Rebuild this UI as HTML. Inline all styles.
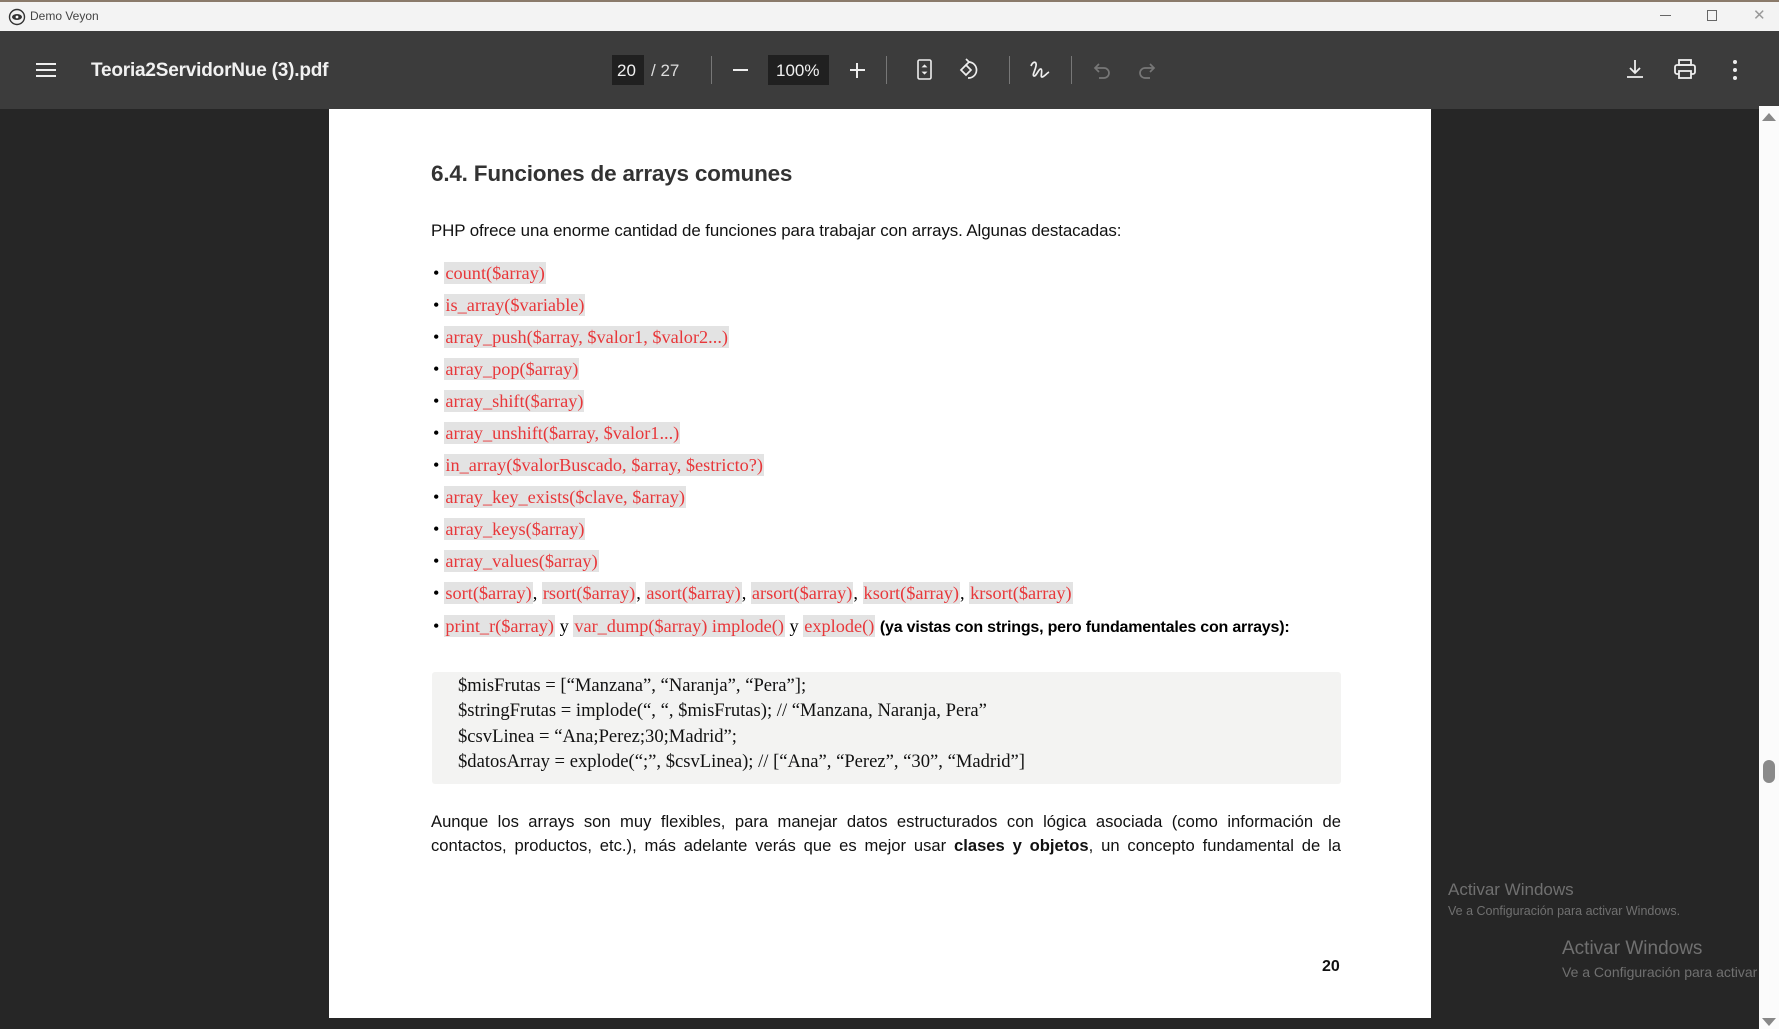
<!DOCTYPE html>
<html><head><meta charset="utf-8"><style>
*{margin:0;padding:0;box-sizing:border-box}
body{width:1779px;height:1029px;overflow:hidden;background:#262626;font-family:"Liberation Sans",sans-serif;position:relative}
.abs{position:absolute}
#tb{left:0;top:0;width:1779px;height:31px;background:#f3f3f3;border-top:2px solid #8a7a6a}
#bar{left:0;top:31px;width:1779px;height:78px;background:#3c3c3c}
.w{color:#f1f1f1}
.sep{width:1px;height:28px;background:#777;top:56px}
svg{position:absolute}
#page{left:329px;top:109px;width:1102px;height:909px;background:#fff}
.li{position:absolute;left:433px;font-family:"Liberation Serif",serif;font-size:18.3px;color:#000;white-space:nowrap}
.li .b{margin-right:5px}
.r{color:#e8373a;background:#e3e3e3;padding:1px 1px}
.c{font-family:"Liberation Serif",serif;font-size:18.6px;color:#111;position:absolute;left:458px;white-space:nowrap}
.wm{color:#707070;white-space:nowrap}
.p{position:absolute;left:431px;width:910px;font-size:16.6px;color:#111;text-align:justify;text-align-last:justify;white-space:nowrap}
</style></head><body>
<div id="tb" class="abs">
 <svg width="18" height="18" style="left:8px;top:6px" viewBox="0 0 18 18"><circle cx="9" cy="9" r="7.5" fill="none" stroke="#333" stroke-width="1.4"/><ellipse cx="9" cy="9" rx="5" ry="3" fill="#333"/><circle cx="9" cy="9" r="1.4" fill="#fff"/></svg>
 <div class="abs" style="left:30px;top:7px;font-size:12px;color:#444">Demo Veyon</div>
 <div class="abs" style="left:1660px;top:13px;width:11px;height:1px;background:#666"></div>
 <div class="abs" style="left:1707px;top:8px;width:10px;height:11px;border:1px solid #666"></div>
 <div class="abs" style="left:1753px;top:4px;font-size:15px;color:#999">✕</div>
</div>
<div id="bar" class="abs">
 <svg width="20" height="16" style="left:36px;top:31px"><rect y="1" width="20" height="2" fill="#eee"/><rect y="7" width="20" height="2" fill="#eee"/><rect y="13" width="20" height="2" fill="#eee"/></svg>
 <div class="abs w" style="left:91px;top:29px;font-size:19px;font-weight:bold;letter-spacing:-0.2px">Teoria2ServidorNue (3).pdf</div>
 <div class="abs" style="left:612px;top:24px;width:32px;height:30px;background:#202020"></div>
 <div class="abs w" style="left:617px;top:30px;font-size:17px">20</div>
 <div class="abs w" style="left:651px;top:30px;font-size:17px;color:#ddd">/ 27</div>
 <div class="abs sep" style="left:711px;top:25px"></div>
 <div class="abs" style="left:733px;top:38px;width:15px;height:2px;background:#eee"></div>
 <div class="abs" style="left:768px;top:24px;width:61px;height:30px;background:#202020"></div>
 <div class="abs w" style="left:776px;top:30px;font-size:17px">100%</div>
 <div class="abs" style="left:850px;top:38px;width:15px;height:2px;background:#eee"></div>
 <div class="abs" style="left:856px;top:32px;width:2px;height:15px;background:#eee"></div>
 <div class="abs sep" style="left:886px;top:25px"></div>
 <svg width="20" height="24" style="left:915px;top:27px" fill="none" stroke="#eee" stroke-width="1.6"><rect x="3" y="2" width="13" height="19" rx="1.5"/><path d="M9.5 7l-2 2h4zM9.5 16l-2-2h4z" fill="#eee" stroke-width="0.8"/></svg>
 <svg width="26" height="26" style="left:956px;top:26px" fill="none" stroke="#eee" stroke-width="1.7"><path d="M5 13l5-5 5 5-5 5z"/><path d="M13 5a8 8 0 1 1 -1 16"/><path d="M10 2l3 3-3 3"/></svg>
 <div class="abs sep" style="left:1009px;top:25px"></div>
 <svg width="24" height="24" style="left:1028px;top:27px" fill="none" stroke="#eee" stroke-width="1.7"><path d="M3 8c2-5 6-5 5 0s-4 9-2 10 5-8 7-7-1 8 1 8 5-4 7-5"/></svg>
 <div class="abs sep" style="left:1071px;top:25px"></div>
 <svg width="22" height="22" style="left:1091px;top:29px" fill="none" stroke="#777" stroke-width="1.7"><path d="M5 8h8a5 5 0 0 1 0 10H8"/><path d="M8 4L4 8l4 4"/></svg>
 <svg width="22" height="22" style="left:1136px;top:29px" fill="none" stroke="#777" stroke-width="1.7"><path d="M17 8H9a5 5 0 0 0 0 10h5"/><path d="M14 4l4 4-4 4"/></svg>
 <svg width="24" height="24" style="left:1623px;top:26px" fill="none" stroke="#eee" stroke-width="1.8"><path d="M12 3v13M7 11l5 5 5-5M4 20h16"/></svg>
 <svg width="26" height="24" style="left:1672px;top:26px" fill="none" stroke="#eee" stroke-width="1.8"><rect x="7" y="3" width="12" height="5"/><rect x="3" y="8" width="20" height="9" rx="2"/><rect x="7" y="14" width="12" height="7" fill="#3c3c3c"/></svg>
 <svg width="6" height="22" style="left:1732px;top:28px" fill="#eee"><circle cx="3" cy="3" r="2"/><circle cx="3" cy="11" r="2"/><circle cx="3" cy="19" r="2"/></svg>
</div>
<div id="page" class="abs"></div>
<div class="abs" style="left:431px;top:161px;font-size:22.5px;font-weight:bold;color:#333;letter-spacing:-0.2px">6.4. Funciones de arrays comunes</div>
<div class="abs" style="left:431px;top:221px;font-size:16.9px;color:#111;letter-spacing:-0.1px">PHP ofrece una enorme cantidad de funciones para trabajar con arrays. Algunas destacadas:</div>
<div class="li" style="top:263px"><span class="b">•</span><span class="r">count($array)</span></div>
<div class="li" style="top:295px"><span class="b">•</span><span class="r">is_array($variable)</span></div>
<div class="li" style="top:327px"><span class="b">•</span><span class="r">array_push($array, $valor1, $valor2...)</span></div>
<div class="li" style="top:359px"><span class="b">•</span><span class="r">array_pop($array)</span></div>
<div class="li" style="top:391px"><span class="b">•</span><span class="r">array_shift($array)</span></div>
<div class="li" style="top:423px"><span class="b">•</span><span class="r">array_unshift($array, $valor1...)</span></div>
<div class="li" style="top:455px"><span class="b">•</span><span class="r">in_array($valorBuscado, $array, $estricto?)</span></div>
<div class="li" style="top:487px"><span class="b">•</span><span class="r">array_key_exists($clave, $array)</span></div>
<div class="li" style="top:519px"><span class="b">•</span><span class="r">array_keys($array)</span></div>
<div class="li" style="top:551px"><span class="b">•</span><span class="r">array_values($array)</span></div>
<div class="li" style="top:583px"><span class="b">•</span><span class="r">sort($array)</span>, <span class="r">rsort($array)</span>, <span class="r">asort($array)</span>, <span class="r">arsort($array)</span>, <span class="r">ksort($array)</span>, <span class="r">krsort($array)</span></div>
<div class="li" style="top:616px"><span class="b">•</span><span class="r">print_r($array)</span> y <span class="r">var_dump($array) implode()</span> y <span class="r">explode()</span> <b style="font-family:'Liberation Sans',sans-serif;font-size:16px;letter-spacing:-0.2px">(ya vistas con strings, pero fundamentales con arrays):</b></div>
<div class="abs" style="left:432px;top:672px;width:909px;height:112px;background:#f3f3f2;border-radius:3px"></div>
<div class="c" style="top:675px">$misFrutas = [“Manzana”, “Naranja”, “Pera”];</div>
<div class="c" style="top:700px">$stringFrutas = implode(“, “, $misFrutas); // “Manzana, Naranja, Pera”</div>
<div class="c" style="top:726px">$csvLinea = “Ana;Perez;30;Madrid”;</div>
<div class="c" style="top:751px">$datosArray = explode(“;”, $csvLinea); // [“Ana”, “Perez”, “30”, “Madrid”]</div>
<div class="p" style="top:812px">Aunque los arrays son muy flexibles, para manejar datos estructurados con lógica asociada (como información de</div>
<div class="p" style="top:836px">contactos, productos, etc.), más adelante verás que es mejor usar <b>clases y objetos</b>, un concepto fundamental de la</div>
<div class="abs" style="left:1322px;top:958px;font-size:16px;font-weight:bold;color:#111">20</div>
<div class="abs wm" style="left:1448px;top:880px;font-size:17px">Activar Windows</div>
<div class="abs wm" style="left:1448px;top:904px;font-size:12.5px">Ve a Configuración para activar Windows.</div>
<div class="abs wm" style="left:1562px;top:938px;font-size:19px">Activar Windows</div>
<div class="abs wm" style="left:1562px;top:964px;font-size:14px;width:197px;overflow:hidden">Ve a Configuración para activar Windows.</div>
<div class="abs" style="left:1759px;top:106px;width:20px;height:923px;background:#fbfbfb"></div>
<div class="abs" style="left:1762px;top:113px;width:0;height:0;border-left:7px solid transparent;border-right:7px solid transparent;border-bottom:8px solid #888"></div>
<div class="abs" style="left:1762px;top:1018px;width:0;height:0;border-left:7px solid transparent;border-right:7px solid transparent;border-top:8px solid #888"></div>
<div class="abs" style="left:1763px;top:760px;width:12px;height:23px;background:#8a8a8a;border-radius:6px"></div>
</body></html>
